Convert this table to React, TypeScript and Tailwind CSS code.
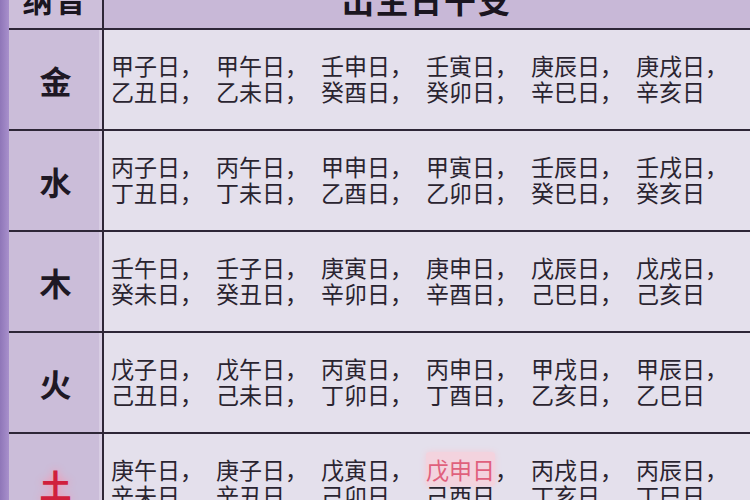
const rows: { el: string; lines: string[][]; red?: boolean }[] = [
  {
    el: "金",
    lines: [
      ["甲子日", "甲午日", "壬申日", "壬寅日", "庚辰日", "庚戌日"],
      ["乙丑日", "乙未日", "癸酉日", "癸卯日", "辛巳日", "辛亥日"],
    ],
  },
  {
    el: "水",
    lines: [
      ["丙子日", "丙午日", "甲申日", "甲寅日", "壬辰日", "壬戌日"],
      ["丁丑日", "丁未日", "乙酉日", "乙卯日", "癸巳日", "癸亥日"],
    ],
  },
  {
    el: "木",
    lines: [
      ["壬午日", "壬子日", "庚寅日", "庚申日", "戊辰日", "戊戌日"],
      ["癸未日", "癸丑日", "辛卯日", "辛酉日", "己巳日", "己亥日"],
    ],
  },
  {
    el: "火",
    lines: [
      ["戊子日", "戊午日", "丙寅日", "丙申日", "甲戌日", "甲辰日"],
      ["己丑日", "己未日", "丁卯日", "丁酉日", "乙亥日", "乙巳日"],
    ],
  },
  {
    el: "土",
    red: true,
    lines: [
      ["庚午日", "庚子日", "戊寅日", "戊申日", "丙戌日", "丙辰日"],
      ["辛未日", "辛丑日", "己卯日", "己酉日", "丁亥日", "丁巳日"],
    ],
  },
];

const font = { fontFamily: '"Noto Sans CJK SC", "Noto Sans", sans-serif' };

export default function App() {
  return (
    <div className="w-[750px] h-[500px] overflow-hidden flex bg-[#e4e0ec]" style={font}>
      <div className="w-[9px] shrink-0 bg-gradient-to-r from-[#8f76b8] to-[#a890cc]" />
      <div className="flex-1 flex flex-col -mt-[30px]">
        <div className="flex h-[60px] shrink-0 border-b-2 border-[#2e2637]">
          <div className="w-[95px] shrink-0 bg-[#cdbfda] flex items-center justify-center text-[30px] font-bold text-[#1a1520] tracking-[3px] border-r-2 border-[#2e2637]">
            纳音
          </div>
          <div className="flex-1 bg-[#c8b8d7] flex items-center justify-center text-[32px] font-bold text-[#1a1520] tracking-[2px]">
            出生日干支
          </div>
        </div>
        {rows.map((r, i) => (
          <div key={i} className="flex h-[101px] shrink-0 border-b-2 border-[#2e2637]">
            <div className="w-[95px] shrink-0 bg-[#cbbdd9] flex items-center justify-center border-r-2 border-[#2e2637] shadow-[inset_-3px_0_0_#d8cde3]">
              {r.red ? (
                <span className="text-[32px] font-bold text-[#d0203c] [text-shadow:0_0_8px_#ff90a8]">{r.el}</span>
              ) : (
                <span className="text-[32px] font-bold text-[#1e1824]">{r.el}</span>
              )}
            </div>
            <div className="flex-1 bg-[#e4e0ec] flex flex-col justify-center pl-[7px] pb-[3px]">
              {r.lines.map((line, li) => (
                <div key={li} className="flex h-[26px] items-center">
                  {line.map((d, di) => {
                    const hl = r.red && li === 0 && di === 3;
                    return (
                      <span
                        key={di}
                        className="w-[105px] shrink-0 text-[23px] leading-[26px] text-[#2a2430] whitespace-nowrap"
                      >
                        {hl ? (
                          <span className="text-[#e0607c] bg-[#f3d3de] rounded-[3px] [box-shadow:0_0_6px_#f3cbd8]">{d}</span>
                        ) : (
                          d
                        )}
                        {li === 0 || di < 5 ? "，" : ""}
                      </span>
                    );
                  })}
                </div>
              ))}
            </div>
          </div>
        ))}
      </div>
    </div>
  );
}
